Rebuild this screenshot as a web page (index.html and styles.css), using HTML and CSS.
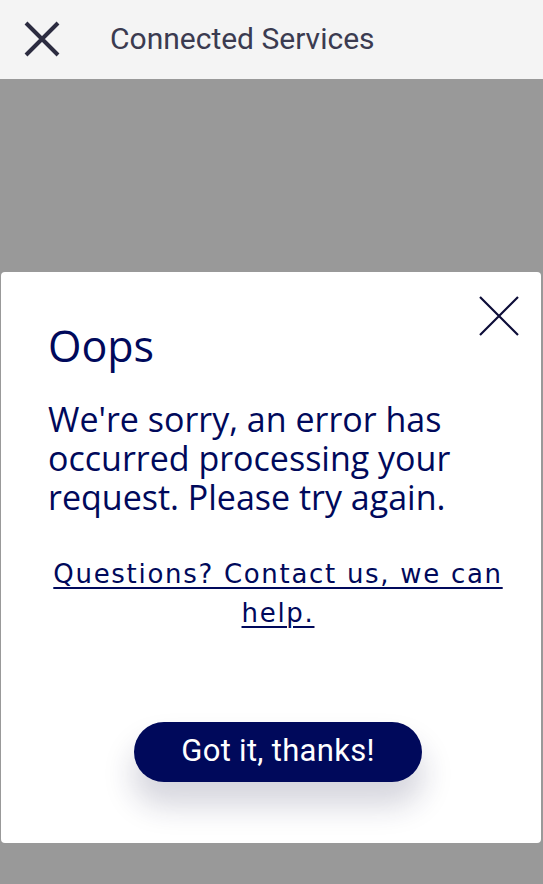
FILE: index.html
```html
<!DOCTYPE html>
<html lang="en">
<head>
<meta charset="utf-8">
<title>Connected Services</title>
<link rel="stylesheet" href="styles.css">
</head>
<body>
<header class="topbar">
  <svg class="topbar-close" width="36" height="36" viewBox="0 0 36 36" aria-hidden="true">
    <path d="M2 2 L34 34 M34 2 L2 34" />
  </svg>
  <h1 class="topbar-title">Connected Services</h1>
</header>
<main class="overlay">
  <section class="modal">
    <svg class="modal-close" width="42" height="40" viewBox="0 0 42 40" aria-hidden="true">
      <path d="M2 1 L40 39 M40 1 L2 39" />
    </svg>
    <h2 class="modal-title">Oops</h2>
    <p class="modal-text">We're sorry, an error has occurred processing your request. Please try again.</p>
    <div class="link-wrap"><a class="help-link" href="#">Questions? Contact us, we can help.</a></div>
    <div class="actions"><button class="btn-primary" type="button">Got it, thanks!</button></div>
  </section>
</main>
</body>
</html>
```
FILE: styles.css
```css
html, body {
  margin: 0;
  padding: 0;
}
body {
  width: 543px;
  height: 884px;
  background: #999999;
  overflow: hidden;
  font-family: "Open Sans", "Noto Sans", sans-serif;
}
.topbar {
  height: 79px;
  background: #f4f4f4;
  display: flex;
  align-items: center;
  padding-left: 24px;
  box-sizing: border-box;
}
.topbar-close {
  flex: none;
  margin-top: -2px;
}
.topbar-close path {
  stroke: #2c2c40;
  stroke-width: 4;
  fill: none;
}
.topbar-title {
  margin: -2px 0 0 50px;
  font-family: Roboto, "Liberation Sans", sans-serif;
  font-weight: 400;
  font-size: 30px;
  color: #3b3b50;
  line-height: 1;
}
.overlay {
  padding-top: 193px;
}
.modal {
  position: relative;
  margin: 0 2px 0 1px;
  background: #ffffff;
  border-radius: 4px;
  padding: 50px 48px 61px 47px;
}
.modal-close {
  position: absolute;
  top: 24px;
  right: 21px;
}
.modal-close path {
  stroke: #0d0d38;
  stroke-width: 2.2;
  fill: none;
}
.modal-title {
  margin: 0;
  font-size: 43px;
  line-height: 48px;
  font-weight: 500;
  color: #00095b;
}
.modal-text {
  margin: 30px 0 0;
  font-size: 34px;
  line-height: 39px;
  font-weight: 500;
  color: #00095b;
}
.link-wrap {
  margin: 38px -30px 0;
  padding-left: 15px;
  text-align: center;
  font-family: "DejaVu Sans", sans-serif;
  font-size: 26px;
  line-height: 39px;
}
.help-link {
  letter-spacing: 1.7px;
  color: #00095b;
  text-decoration: underline;
  text-decoration-thickness: 1.5px;
  text-underline-offset: 4px;
}
.actions {
  margin-top: 89px;
  padding-left: 15px;
  display: flex;
  justify-content: center;
}
.btn-primary {
  width: 288px;
  height: 60px;
  border: none;
  border-radius: 30px;
  background: #00095b;
  color: #ffffff;
  font-family: Roboto, "Liberation Sans", sans-serif;
  font-size: 31px;
  font-weight: 400;
  letter-spacing: 0.3px;
  padding: 0 0 3px;
  box-shadow: 0 22px 30px 2px rgba(30, 30, 70, 0.18);
  cursor: pointer;
}
```
